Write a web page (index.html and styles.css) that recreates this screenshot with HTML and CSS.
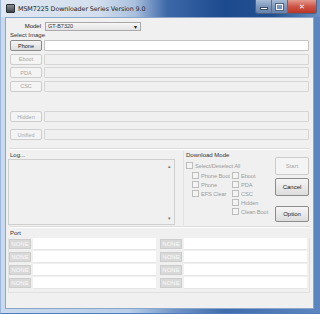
FILE: index.html
```html
<!DOCTYPE html>
<html lang="en">
<head>
    <meta charset="UTF-8">
    <title>MSM7225 Downloader Series Version 9.0</title>
    <link rel="stylesheet" href="styles.css">
</head>
<body>
    <div class="window">
        <div class="titlebar">
            <span class="app-icon"></span>
            <span class="title">MSM7225 Downloader Series Version 9.0</span>
            <div class="caption">
                <span class="cap-btn cap-min"><i></i></span>
                <span class="cap-btn cap-max"><i></i></span>
                <span class="cap-btn cap-close">&#x2715;</span>
            </div>
        </div>

        <div class="client">
            <div class="model-row">
                <label class="model-label">Model</label>
                <div class="combo">GT-B7320<span class="combo-arrow">&#9662;</span></div>
            </div>
            <div class="group-label">Select Image</div>

            <div class="image-row">
                <button class="btn btn-on">Phone</button>
                <div class="field field-on"></div>
            </div>
            <div class="image-row">
                <button class="btn">Eboot</button>
                <div class="field"></div>
            </div>
            <div class="image-row">
                <button class="btn">PDA</button>
                <div class="field"></div>
            </div>
            <div class="image-row">
                <button class="btn">CSC</button>
                <div class="field"></div>
            </div>
            <div class="image-row row-gap">
                <button class="btn">Hidden</button>
                <div class="field"></div>
            </div>
            <div class="image-row">
                <button class="btn">Unified</button>
                <div class="field"></div>
            </div>

            <div class="sep"></div>

            <div class="lower">
                <div class="log-col">
                    <div class="group-label">Log...</div>
                    <div class="log-box">
                        <div class="log-scroll">
                            <span>&#9652;</span>
                            <span>&#9662;</span>
                        </div>
                    </div>
                </div>

                <div class="mode">
                    <div class="group-label">Download Mode</div>
                    <label class="check check-all"><i></i>Select/Deselect All</label>
                    <div class="mode-cols">
                        <div class="mode-col">
                            <label class="check"><i></i>Phone Boot</label>
                            <label class="check"><i></i>Phone</label>
                            <label class="check"><i></i>EFS Clear</label>
                        </div>
                        <div class="mode-col">
                            <label class="check"><i></i>Eboot</label>
                            <label class="check"><i></i>PDA</label>
                            <label class="check"><i></i>CSC</label>
                            <label class="check"><i></i>Hidden</label>
                            <label class="check"><i></i>Clean Boot</label>
                        </div>
                    </div>
                </div>

                <div class="actions">
                    <button class="act act-off">Start</button>
                    <button class="act">Cancel</button>
                    <button class="act act-option">Option</button>
                </div>
            </div>

            <div class="sep sep-port"></div>
            <div class="group-label">Port</div>
            <div class="port">
                <div class="port-row">
                    <span class="none">NONE</span><div class="port-field"></div>
                    <span class="none">NONE</span><div class="port-field"></div>
                </div>
                <div class="port-row">
                    <span class="none">NONE</span><div class="port-field"></div>
                    <span class="none">NONE</span><div class="port-field"></div>
                </div>
                <div class="port-row">
                    <span class="none">NONE</span><div class="port-field"></div>
                    <span class="none">NONE</span><div class="port-field"></div>
                </div>
                <div class="port-row port-last">
                    <span class="none">NONE</span><div class="port-field"></div>
                    <span class="none">NONE</span><div class="port-field"></div>
                </div>
            </div>
        </div>
    </div>
</body>
</html>
```

FILE: styles.css
```css
/* Window frame */
body {
    margin: 0;
    padding: 0;
    background-color: #ffffff;
    font-family: "Liberation Sans", Arial, sans-serif;
    font-size: 6px;
    color: #333;
}

.window {
    width: 320px;
    height: 314px;
    box-sizing: border-box;
    display: flex;
    flex-direction: column;
    background: linear-gradient(to right, #c9daee 0%, #b9cfe9 40%, #6f93c6 55%, #3f6cab 70%, #5d86c0 100%);
    border-left: 1px solid #9bb7dc;
    border-bottom: 1px solid #4d7cc0;
}

.titlebar {
    height: 17px;
    display: flex;
    align-items: flex-start;
    background: linear-gradient(to right, #dfe7f1 0%, #d3dfee 30%, #a9c0de 42%, #3d68a8 52%, #1c4a8e 70%, #22508f 85%, #6b90c4 100%);
}

.app-icon {
    width: 7px;
    height: 7px;
    margin: 4px 3px 0 5px;
    background: linear-gradient(#8a8f96, #3e4248);
    border: 1px solid #2c2f33;
    border-radius: 1px;
}

.title {
    font-family: "DejaVu Sans", sans-serif;
    font-size: 6.4px;
    color: #1e1e1e;
    margin-top: 5px;
    letter-spacing: -0.1px;
}

.caption {
    margin-left: auto;
    margin-right: 3px;
    display: flex;
    height: 13px;
    border: 1px solid #4f6481;
    border-top: none;
    border-radius: 0 0 3px 3px;
    overflow: hidden;
}

.cap-btn {
    height: 13px;
    display: flex;
    align-items: center;
    justify-content: center;
}

.cap-min,
.cap-max {
    width: 15px;
    background: linear-gradient(#a9bcd6, #7f98bc 50%, #6884ad);
    border-right: 1px solid #56708f;
}

.cap-min i {
    width: 6px;
    height: 1px;
    margin-top: 3px;
    background: #fff;
    border: 1px solid #3c4e68;
}

.cap-max i {
    width: 5px;
    height: 4px;
    border: 1px solid #eef3f9;
    outline: 1px solid #51667f;
}

.cap-close {
    width: 28px;
    background: linear-gradient(#e39b8e, #cf5547 50%, #bb3527);
    color: #fff;
    font-size: 7px;
    font-weight: bold;
    font-family: "DejaVu Sans", sans-serif;
}

/* Client area */
.client {
    flex: 1;
    margin: 0 6px 4px 4px;
    background-color: #f0f0f0;
    border: 1px solid #8ca6c9;
    display: flex;
    flex-direction: column;
}

.model-row {
    display: flex;
    align-items: center;
    margin-top: 3px;
    height: 10px;
}

.model-label {
    width: 35px;
    text-align: right;
    margin-right: 4px;
    color: #222;
}

.combo {
    width: 96px;
    height: 9px;
    box-sizing: border-box;
    border: 1px solid #a9a9a9;
    background: linear-gradient(#f6f6f6, #e4e4e4);
    display: flex;
    align-items: center;
    padding-left: 2px;
    color: #333;
    font-size: 5.5px;
}

.combo-arrow {
    margin-left: auto;
    margin-right: 3px;
    font-size: 6px;
    color: #222;
}

.group-label {
    margin-left: 4px;
    color: #333;
    height: 8px;
    line-height: 8px;
    white-space: nowrap;
}

/* Image selection rows */
.image-row {
    display: flex;
    height: 11px;
    margin: 1px 4px 1.5px 4px;
    gap: 2px;
}

.row-gap {
    margin-top: 18px;
    margin-bottom: 6px;
}

.btn {
    width: 32px;
    height: 11px;
    padding: 0;
    box-sizing: border-box;
    border: 1px solid #cdcdcd;
    border-radius: 2px;
    background-color: #f4f4f4;
    color: #a8a8a8;
    font-family: "Liberation Sans", Arial, sans-serif;
    font-size: 5.5px;
}

.btn-on {
    border-color: #8a8a8a;
    background: linear-gradient(#f4f4f4, #dedede);
    color: #222;
}

.field {
    flex: 1;
    box-sizing: border-box;
    border: 1px solid #d6d6d6;
    border-radius: 1px;
    background-color: #f0f0f0;
}

.field-on {
    background-color: #fff;
    border-color: #c4c4c4;
}

.sep {
    height: 0;
    border-top: 1px solid #dcdcdc;
    border-bottom: 1px solid #fff;
    margin: 6px 3px 1.5px 3px;
}

/* Log, mode, actions */
.lower {
    display: flex;
    height: 74px;
}

.log-col {
    width: 169px;
    display: flex;
    flex-direction: column;
}

.log-box {
    margin: 0 0 0 2px;
    flex: 1;
    border: 1px solid #cfcfcf;
    background-color: #f0f0f0;
    display: flex;
    justify-content: flex-end;
}

.log-scroll {
    width: 9px;
    display: flex;
    flex-direction: column;
    justify-content: space-between;
    align-items: center;
    padding: 3px 0;
    font-size: 5px;
    color: #777;
}

.mode {
    width: 86px;
    margin-left: 8px;
    border-left: 1px solid #e2e2e2;
    padding-left: 2px;
}

.mode .group-label {
    margin-left: 0;
    margin-bottom: 2px;
}

.check {
    display: flex;
    align-items: center;
    height: 9px;
    color: #9c9c9c;
    font-size: 5.7px;
    white-space: nowrap;
    letter-spacing: -0.1px;
}

.check i {
    flex: none;
    width: 5px;
    height: 5px;
    border: 1px solid #bdbdbd;
    background-color: #f4f4f4;
    margin-right: 2px;
}

.check-all {
    margin-bottom: 1px;
}

.mode-cols {
    display: flex;
    padding-left: 6px;
}

.mode-col {
    width: 43px;
}

.actions {
    margin-left: auto;
    margin-right: 4px;
    width: 34px;
    display: flex;
    flex-direction: column;
    padding-top: 6px;
}

.act {
    height: 19px;
    padding: 0;
    margin-bottom: 3px;
    border: 1px solid #8c8c8c;
    border-radius: 2px;
    background: linear-gradient(#f6f6f6, #dcdcdc);
    color: #222;
    font-family: "Liberation Sans", Arial, sans-serif;
    font-size: 6px;
}

.act-off {
    border-color: #cccccc;
    background: #f4f4f4;
    color: #a8a8a8;
}

.act-option {
    margin-top: 7px;
    height: 17px;
}

/* Port grid */
.sep-port {
    margin-top: 1px;
    margin-bottom: 1px;
}

.port {
    margin: 1px 3px 0 2px;
    border: 1px solid #e0e0e0;
    border-top: none;
    padding-bottom: 2px;
}

.port-row {
    display: flex;
    align-items: center;
    height: 11px;
    margin-bottom: 2px;
    gap: 2px;
}

.port-last {
    margin-top: 2px;
}

.none {
    width: 22px;
    height: 10px;
    box-sizing: border-box;
    border: 1px solid #cdcdcd;
    background-color: #d9d9d9;
    color: #fbfbfb;
    font-size: 6px;
    display: flex;
    align-items: center;
    justify-content: center;
}

.port-field {
    flex: 1;
    height: 11px;
    background-color: #fff;
    border-bottom: 1px solid #e6e6e6;
    margin-right: 2px;
}
```
